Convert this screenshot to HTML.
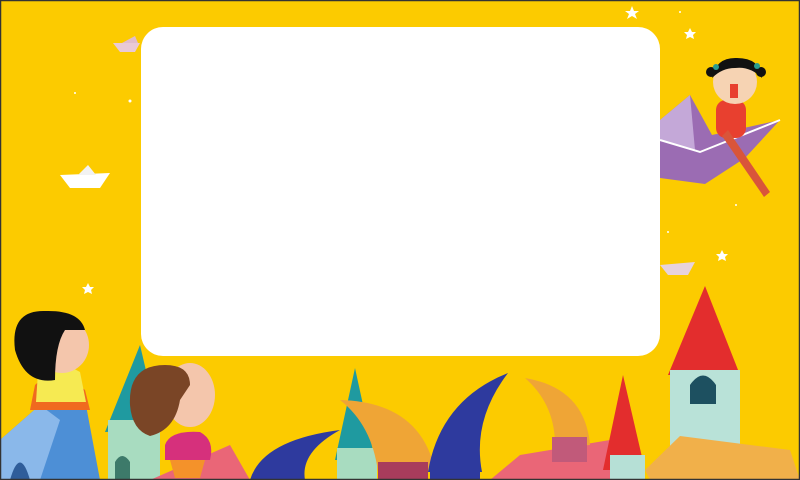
<!DOCTYPE html>
<html><head><meta charset="utf-8"><style>
html,body{margin:0;padding:0;width:800px;height:480px;overflow:hidden;background:#fccb00}
svg{display:block}
</style></head><body>
<svg width="800" height="480" viewBox="0 0 800 480" xmlns="http://www.w3.org/2000/svg">
<rect x="0" y="0" width="800" height="480" fill="#fccb00"/>
<g fill="#fff">
<polygon points="632,6 634,11 639,11 635,14 637,19 632,16 627,19 629,14 625,11 630,11"/>
<polygon points="690,28 692,32 696,32 693,35 694,39 690,37 686,39 687,35 684,32 688,32"/>
<polygon points="722,250 724,254 728,254 725,257 726,261 722,259 718,261 719,257 716,254 720,254"/>
<polygon points="88,283 90,287 94,287 91,290 92,294 88,292 84,294 85,290 82,287 86,287"/>
<circle cx="130" cy="101" r="1.5"/><circle cx="75" cy="93" r="1"/><circle cx="680" cy="12" r="1"/><circle cx="736" cy="205" r="1"/><circle cx="668" cy="232" r="1"/>
</g>
<polygon points="60,175 110,173 100,188 70,188" fill="#fff"/><polygon points="78,175 88,165 96,175" fill="#f2f2f2"/>
<polygon points="113,43 140,43 135,52 120,52" fill="#e9c9d6"/><polygon points="122,43 135,36 138,43" fill="#e0bccc"/>
<polygon points="660,265 695,262 688,275 668,275" fill="#e7d2dc"/>
<rect x="141" y="27" width="519" height="329" rx="22" fill="#fff"/>
<polygon points="660,120 690,95 712,135 780,120 745,158 705,184 660,178" fill="#9b6cb3"/>
<polygon points="660,120 690,95 695,150 660,140" fill="#c4a8d8"/>
<polyline points="660,140 700,152 780,120" fill="none" stroke="#fff" stroke-width="2"/>
<rect x="716" y="100" width="30" height="38" rx="10" fill="#e8402f"/>
<circle cx="735" cy="82" r="22" fill="#f6d3b3"/>
<path d="M712,78 Q716,57 737,58 Q760,58 762,78 Q750,66 735,68 Q722,68 712,78Z" fill="#111"/>
<circle cx="711" cy="72" r="5" fill="#111"/><circle cx="761" cy="72" r="5" fill="#111"/>
<circle cx="716" cy="67" r="3" fill="#2a9d8f"/><circle cx="757" cy="66" r="3" fill="#2a9d8f"/>
<rect x="730" y="84" width="8" height="14" fill="#e8402f"/>
<path d="M728,130 L770,192 L764,197 L722,136Z" fill="#d9553a"/>
<polygon points="0,440 40,405 85,400 100,480 0,480" fill="#4d8fd6"/>
<polygon points="0,440 40,405 60,420 40,480 0,480" fill="#8ab8ea"/>
<path d="M10,480 Q20,445 30,480Z" fill="#2f5d9a"/>
<path d="M35,385 Q55,365 85,390 L90,410 L30,410Z" fill="#f06a1f"/>
<path d="M38,372 Q60,360 80,372 L86,402 L36,402Z" fill="#f6ea52"/>
<ellipse cx="62" cy="345" rx="27" ry="28" fill="#f4c6ac"/>
<path d="M15,350 Q10,310 45,311 Q80,310 85,330 L65,330 Q55,345 55,380 Q25,385 15,350Z" fill="#111"/>
<polygon points="105,432 140,345 160,430" fill="#1f9aa0"/>
<rect x="108" y="420" width="52" height="60" fill="#a8dcc0"/>
<path d="M115,480 L115,462 Q122,450 130,462 L130,480Z" fill="#3d7a6a"/>
<path d="M150,480 L230,445 L250,480Z" fill="#ea6677"/>
<path d="M165,445 Q170,430 200,432 Q215,440 210,460 L165,460Z" fill="#d6307c"/>
<path d="M170,460 L205,460 L200,478 L175,478Z" fill="#f4922a"/>
<ellipse cx="190" cy="395" rx="25" ry="32" fill="#f4c6ac"/>
<path d="M130,405 Q128,365 165,365 Q190,365 190,385 L180,400 Q175,430 150,436 Q132,430 130,405Z" fill="#7a4526"/>
<path d="M250,480 Q262,440 340,430 Q300,452 305,480Z" fill="#2e3a9e"/>
<polygon points="335,460 355,368 375,460" fill="#1f9aa0"/>
<rect x="337" y="448" width="40" height="32" fill="#a8dcc0"/>
<path d="M340,400 Q420,402 435,470 L378,472 Q372,425 340,400Z" fill="#efa536"/>
<rect x="378" y="462" width="50" height="18" fill="#a83c5c"/>
<path d="M428,472 Q440,400 508,373 Q472,420 482,472Z" fill="#2e3a9e"/>
<rect x="430" y="462" width="50" height="18" fill="#2e3a9e"/>
<polygon points="490,480 520,455 610,440 620,480" fill="#ea6677"/>
<path d="M525,378 Q585,388 590,445 L555,448 Q556,405 525,378Z" fill="#efa536"/>
<rect x="552" y="437" width="35" height="25" fill="#c15a7a"/>
<polygon points="603,470 623,375 645,470" fill="#e32d2d"/>
<rect x="610" y="455" width="35" height="25" fill="#b6e0d6"/>
<polygon points="668,375 705,286 740,375" fill="#e32d2d"/>
<rect x="670" y="370" width="70" height="110" fill="#b9e2d8"/>
<path d="M690,404 L690,385 Q703,366 716,385 L716,404Z" fill="#1d5060"/>
<polygon points="645,470 680,436 790,450 800,480 650,480" fill="#f1b04a"/>
<rect x="0.5" y="0.5" width="799" height="479" fill="none" stroke="#333" stroke-width="1.5"/>
</svg>
</body></html>
